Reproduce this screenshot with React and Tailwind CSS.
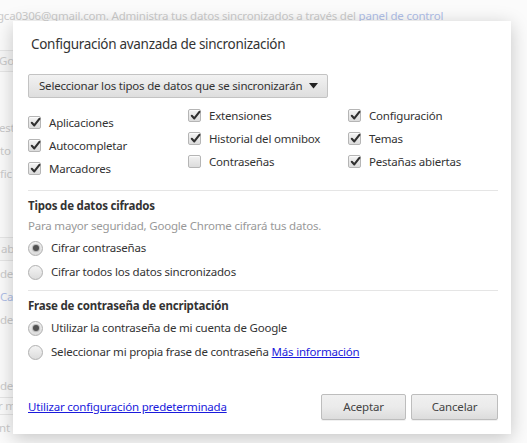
import React from "react";

function Check({ checked }) {
  return (
    <span className="relative inline-flex h-[13px] w-[13px] shrink-0 items-center justify-center rounded-[2px] border border-[#b5b5b5] bg-gradient-to-b from-[#f2f2f2] to-[#dcdcdc] shadow-[inset_0_1px_1px_rgba(255,255,255,0.8)]">
      {checked && (
        <svg width="11" height="11" viewBox="0 0 11 11" className="absolute left-[1px] top-[0px]">
          <path d="M1.8 5.8 L4.3 8.4 L9.4 1.8" fill="none" stroke="#303030" strokeWidth="2.1" strokeLinecap="round" strokeLinejoin="round" />
        </svg>
      )}
    </span>
  );
}

function Radio({ checked }) {
  return (
    <span className="inline-flex h-[15px] w-[15px] shrink-0 items-center justify-center rounded-full border border-[#b0b0b0] bg-gradient-to-b from-[#f4f4f4] to-[#dcdcdc]">
      {checked && <span className="h-[6px] w-[6px] rounded-full bg-[#505050] shadow-[0_0_1px_1px_rgba(80,80,80,0.35)]" />}
    </span>
  );
}

function CheckRow({ checked, label }) {
  return (
    <div className="flex h-[23px] items-center">
      <Check checked={checked} />
      <span className="ml-[8px] text-[#333]">{label}</span>
    </div>
  );
}

function RadioRow({ checked, children }) {
  return (
    <div className="flex h-[24px] items-center">
      <Radio checked={checked} />
      <span className="ml-[8px] text-[#333]">{children}</span>
    </div>
  );
}

function Btn({ children, w }) {
  return (
    <button className={`flex h-[26px] items-center justify-center rounded-[2px] border border-[#bdbdbd] bg-gradient-to-b from-[#f0f0f0] via-[#ebebeb] to-[#dcdcdc] text-[#444] shadow-[0_1px_0_rgba(0,0,0,0.06)] ${w}`}>
      {children}
    </button>
  );
}

export default function App() {
  return (
    <div className="relative h-[443px] w-[527px] overflow-hidden bg-[#fbfbfb] font-['Noto_Sans',sans-serif] text-[11.5px] tracking-[-0.2px]">
      {/* background page (faded behind the modal) */}
      <div className="flex flex-col text-[#cbcbcb]">
        <div className="ml-[-3px] mt-[7px] h-[18px] whitespace-nowrap">
          gca0306@gmail.com. Administra tus datos sincronizados a través del <span className="text-[#b0bfe8]">panel de control</span>
        </div>
        <div className="ml-[-20px] mt-[25px] flex h-[22px] w-[40px] items-center rounded-[2px] border border-[#e6e6e6] bg-[#f7f7f7] pl-[18px]">Go</div>
        <div className="ml-[-1px] mt-[44px] h-[23px] leading-[23px]">est</div>
        <div className="ml-[0px] h-[23px] leading-[23px]">to</div>
        <div className="ml-[0px] h-[23px] leading-[23px]">fic</div>
        <div className="ml-[-20px] mt-[52px] flex h-[24px] w-[40px] items-center rounded-[2px] border border-[#e6e6e6] bg-[#f7f7f7] pl-[20px]">ab</div>
        <div className="ml-[0px] mt-[1px] h-[23px] leading-[23px]">de</div>
        <div className="ml-[0px] h-[23px] leading-[23px] text-[#b0bfe8]">Ca</div>
        <div className="ml-[0px] h-[23px] leading-[23px]">de</div>
        <div className="ml-[0px] mt-[43px] h-[23px] leading-[23px]">de</div>
        <div className="ml-[-20px] flex h-[18px] w-[40px] items-center border-y border-[#e6e6e6] pl-[18px]">r m</div>
        <div className="ml-[-1px] mt-[1px] h-[23px] leading-[23px]">nt</div>
      </div>

      {/* dialog */}
      <div className="absolute left-[13px] top-[21px] flex h-[413px] w-[498px] flex-col bg-white pl-[15px] pr-[13px] shadow-[0_4px_18px_rgba(0,0,0,0.22)]">
        <h1 className="ml-[3px] mt-[13px] h-[20px] text-[13.5px] leading-[20px] tracking-[-0.3px] text-[#333]">
          Configuración avanzada de sincronización
        </h1>
        <div className="mt-[20px] flex">
          <div className="flex h-[24px] w-[300px] items-center justify-between whitespace-nowrap rounded-[2px] border border-[#c3c3c3] bg-gradient-to-b from-[#f2f2f2] to-[#dedede] pl-[10px] pr-[9px] text-[#333]">
            <span>Seleccionar los tipos de datos que se sincronizarán</span>
            <svg width="9" height="6" viewBox="0 0 9 6">
              <path d="M0 0 H9 L4.5 5.5 Z" fill="#222" />
            </svg>
          </div>
        </div>
        <div className="mt-[6px] grid grid-cols-[160px_160px_1fr]">
          <div className="mt-[7px] flex flex-col">
            <CheckRow checked label="Aplicaciones" />
            <CheckRow checked label="Autocompletar" />
            <CheckRow checked label="Marcadores" />
          </div>
          <div className="flex flex-col">
            <CheckRow checked label="Extensiones" />
            <CheckRow checked label="Historial del omnibox" />
            <CheckRow checked={false} label="Contraseñas" />
          </div>
          <div className="flex flex-col">
            <CheckRow checked label="Configuración" />
            <CheckRow checked label="Temas" />
            <CheckRow checked label="Pestañas abiertas" />
          </div>
        </div>
        <div className="mt-[10px] border-t border-[#e5e5e5]" />
        <div className="mt-[5px] h-[20px] font-bold leading-[20px] text-[#333]">Tipos de datos cifrados</div>
        <div className="h-[20px] leading-[20px] text-[#999]">
          Para mayor seguridad, Google Chrome cifrará tus datos.
        </div>
        <RadioRow checked>Cifrar contraseñas</RadioRow>
        <RadioRow checked={false}>Cifrar todos los datos sincronizados</RadioRow>
        <div className="mt-[6px] border-t border-[#e5e5e5]" />
        <div className="mt-[5px] h-[20px] font-bold leading-[20px] text-[#333]">Frase de contraseña de encriptación</div>
        <RadioRow checked>Utilizar la contraseña de mi cuenta de Google</RadioRow>
        <RadioRow checked={false}>
          Seleccionar mi propia frase de contraseña{" "}
          <a className="text-[#1a1adc] underline">Más información</a>
        </RadioRow>
        <div className="mt-auto mb-[14px] flex items-center justify-between">
          <a className="text-[#1a1adc] underline">Utilizar configuración predeterminada</a>
          <div className="flex gap-[5px]">
            <Btn w="w-[85px]">Aceptar</Btn>
            <Btn w="w-[87px]">Cancelar</Btn>
          </div>
        </div>
      </div>
    </div>
  );
}
